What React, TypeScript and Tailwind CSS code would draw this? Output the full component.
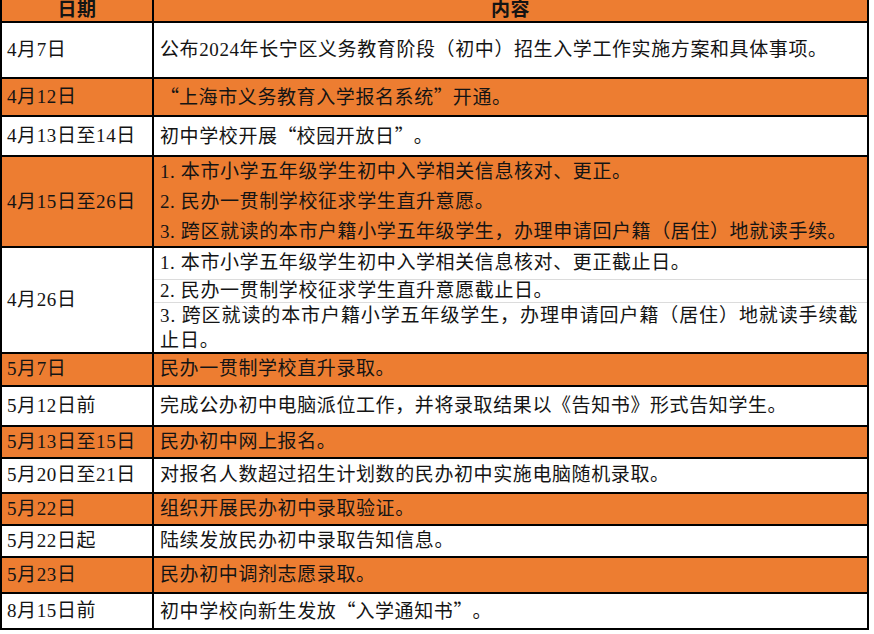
import React from "react";

type Row = {
  date: string;
  h: number;
  orange?: boolean;
  lines?: string[];
  text?: string;
};

const rows: Row[] = [
  { date: "4月7日", h: 56, text: "公布2024年长宁区义务教育阶段（初中）招生入学工作实施方案和具体事项。" },
  { date: "4月12日", h: 38, orange: true, text: "“上海市义务教育入学报名系统”开通。" },
  { date: "4月13日至14日", h: 40, text: "初中学校开展“校园开放日”。" },
  {
    date: "4月15日至26日",
    h: 91,
    orange: true,
    lines: [
      "1. 本市小学五年级学生初中入学相关信息核对、更正。",
      "2. 民办一贯制学校征求学生直升意愿。",
      "3. 跨区就读的本市户籍小学五年级学生，办理申请回户籍（居住）地就读手续。",
    ],
  },
  { date: "4月26日", h: 106 },
  { date: "5月7日", h: 33, orange: true, text: "民办一贯制学校直升录取。" },
  { date: "5月12日前", h: 40, text: "完成公办初中电脑派位工作，并将录取结果以《告知书》形式告知学生。" },
  { date: "5月13日至15日", h: 32, orange: true, text: "民办初中网上报名。" },
  { date: "5月20日至21日", h: 35, text: "对报名人数超过招生计划数的民办初中实施电脑随机录取。" },
  { date: "5月22日", h: 32, orange: true, text: "组织开展民办初中录取验证。" },
  { date: "5月22日起", h: 32, text: "陆续发放民办初中录取告知信息。" },
  { date: "5月23日", h: 36, orange: true, text: "民办初中调剂志愿录取。" },
  { date: "8月15日前", h: 36, text: "初中学校向新生发放“入学通知书”。" },
];

// full-width curly quotes, as in the Song typeface of the original
function Txt({ s }: { s: string }) {
  const parts = s.split(/([“”])/);
  return (
    <>
      {parts.map((p, i) =>
        p === "“" || p === "”" ? (
          <span key={i} className="inline-block w-[19px] text-center font-['Noto_Sans_CJK_SC',sans-serif]">
            {p}
          </span>
        ) : (
          <React.Fragment key={i}>{p}</React.Fragment>
        )
      )}
    </>
  );
}

function Cell({ row }: { row: Row }) {
  if (row.date === "4月26日") {
    return (
      <div className="flex flex-col">
        <div className="h-[32px] flex items-center px-[6px] border-b border-[#dcdcdc]">
          1. 本市小学五年级学生初中入学相关信息核对、更正截止日。
        </div>
        <div className="h-[23px] flex items-center px-[6px] border-b border-[#dcdcdc]">
          2. 民办一贯制学校征求学生直升意愿截止日。
        </div>
        <div className="flex-1 flex items-center px-[6px] leading-[25px] tracking-[0.9px]">
          3. 跨区就读的本市户籍小学五年级学生，办理申请回户籍（居住）地就读手续截止日。
        </div>
      </div>
    );
  }
  if (row.lines) {
    return (
      <div className="flex flex-col justify-center px-[6px] leading-[30px]">
        {row.lines.map((l) => (
          <div key={l}>{l}</div>
        ))}
      </div>
    );
  }
  return (
    <div className="flex items-center px-[6px]">
      <div>
        <Txt s={row.text ?? ""} />
      </div>
    </div>
  );
}

export default function App() {
  return (
    <div className="w-[874px] h-[634px] bg-white overflow-hidden font-['Liberation_Serif','Noto_Sans_CJK_SC',serif] text-[19px] tracking-[0.6px] text-[#141414]">
      <div className="w-[869px] border-l-2 border-r-2 border-black">
        <div className="h-[23px] grid grid-cols-[152px_1fr] bg-[#ED7D31] border-b-2 border-black font-bold leading-none">
          <div className="border-r-2 border-black flex items-center justify-center pb-[2px]">日期</div>
          <div className="flex items-center justify-center pb-[2px]">内容</div>
        </div>
        {rows.map((r) => (
          <div
            key={r.date}
            style={{ height: r.h }}
            className={`grid grid-cols-[152px_1fr] border-b-2 border-black ${r.orange ? "bg-[#ED7D31]" : "bg-white"}`}
          >
            <div className="border-r-2 border-black flex items-center px-[5px]">{r.date}</div>
            <Cell row={r} />
          </div>
        ))}
      </div>
    </div>
  );
}
